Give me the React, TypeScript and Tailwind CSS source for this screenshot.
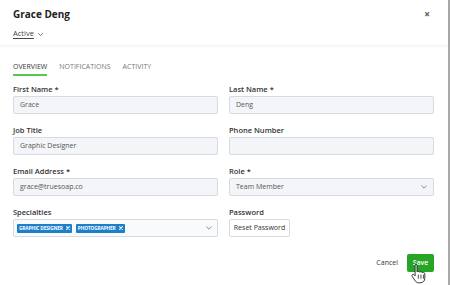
import React from "react";

function Chevron({ className }: { className?: string }) {
  return (
    <svg viewBox="0 0 10 6" className={className} fill="none" stroke="currentColor" strokeWidth="1.4" strokeLinecap="round" strokeLinejoin="round">
      <path d="M1 1l4 4 4-4" />
    </svg>
  );
}

function Field({ label, value, children }: { label: string; value?: string; children?: React.ReactNode }) {
  return (
    <div className="flex flex-col gap-[2px]">
      <div className="h-[10px] leading-[10px] text-[7.5px] font-semibold text-[#333]">{label}</div>
      {children ?? (
        <div className="h-[18px] rounded-[2px] border border-[#d5dbe2] bg-[#f3f5f8] px-[6px] flex items-center text-[7px] text-[#555]">
          {value}
        </div>
      )}
    </div>
  );
}

function Tag({ text }: { text: string }) {
  return (
    <div className="h-[9px] rounded-[1px] bg-[#1b7fca] pl-[2px] pr-[2px] flex items-center gap-[3px] text-white">
      <span className="text-[4.8px] font-bold tracking-[-0.15px] leading-none">{text}</span>
      <svg width="4" height="4" viewBox="0 0 4 4" fill="none" stroke="white" strokeWidth="1.1" strokeLinecap="round">
        <path d="M0.6 0.6l2.8 2.8M3.4 0.6L0.6 3.4" />
      </svg>
    </div>
  );
}

export default function App() {
  return (
    <div className="w-[450px] h-[285px] bg-white relative flex overflow-hidden font-['Open_Sans',sans-serif]">
      <div className="flex-1 flex flex-col">
        <div className="h-[45px] px-[13px] pr-[18px] shadow-[0_1px_3px_rgba(0,0,0,0.07)] relative z-10 flex flex-col">
          <div className="flex items-center justify-between h-[14px] mt-[7px]">
            <div className="text-[10px] font-bold text-[#222] leading-none">Grace Deng</div>
            <div className="text-[10px] font-bold text-[#555] leading-none">×</div>
          </div>
          <div className="flex items-center gap-[4px] mt-[7px] h-[12px]">
            <span className="text-[7.5px] text-[#444] underline underline-offset-[2px] leading-none">Active</span>
            <Chevron className="w-[5px] h-[3px] text-[#444]" />
          </div>
        </div>

        <div className="px-[13px] mt-[18px] flex gap-[12px] text-[7px] leading-none">
          <div className="flex flex-col items-stretch">
            <span className="text-[#333] h-[9px]">OVERVIEW</span>
            <div className="mt-[2px] h-[2px] bg-[#55c949]" />
          </div>
          <span className="text-[#777]">NOTIFICATIONS</span>
          <span className="text-[#777]">ACTIVITY</span>
        </div>

        <div className="pl-[13px] pr-[14px] mt-[8px] grid grid-cols-2 gap-x-[11px] gap-y-[11px]">
          <Field label="First Name *" value="Grace" />
          <Field label="Last Name *" value="Deng" />
          <Field label="Job Title" value="Graphic Designer" />
          <Field label="Phone Number" value="" />
          <Field label="Email Address *" value="grace@truesoap.co" />
          <Field label="Role *">
            <div className="h-[18px] rounded-[2px] border border-[#d5dbe2] bg-[#f3f5f8] px-[6px] flex items-center justify-between text-[7px] text-[#555]">
              <span>Team Member</span>
              <Chevron className="w-[6px] h-[4px] text-[#777]" />
            </div>
          </Field>
          <Field label="Specialties">
            <div className="h-[18px] rounded-[2px] border border-[#d5dbe2] bg-[#f9fafb] pl-[3px] pr-[5px] flex items-center justify-between">
              <div className="flex items-center gap-[4px]">
                <Tag text="GRAPHIC DESIGNER" />
                <Tag text="PHOTOGRAPHER" />
              </div>
              <Chevron className="w-[6px] h-[4px] text-[#777]" />
            </div>
          </Field>
          <Field label="Password">
            <div className="flex">
              <div className="h-[18px] w-[61px] rounded-[2px] border border-[#d5dbe2] bg-white flex items-center justify-center text-[7px] text-[#333]">
                Reset Password
              </div>
            </div>
          </Field>
        </div>

        <div className="pr-[14px] mt-[17px] flex justify-end items-center gap-[9px]">
          <span className="text-[7px] text-[#333]">Cancel</span>
          <div className="h-[18px] w-[27px] rounded-[2px] bg-[#26a526] flex items-center justify-center text-[7px] font-semibold text-white">
            Save
          </div>
        </div>
      </div>
      <div className="w-[2px] bg-[#a9a9a9]" />

      <svg className="absolute left-[411px] top-[263px]" width="16" height="21" viewBox="0 0 16 21">
        <path
          d="M4.5 1.2c.9 0 1.5.6 1.5 1.5v6.2c.3-.4.8-.6 1.3-.6.7 0 1.2.4 1.4.9.3-.3.7-.5 1.2-.5.7 0 1.2.4 1.4 1 .3-.2.6-.3 1-.3.9 0 1.5.7 1.5 1.6v4.2c0 2.6-1.7 4.6-4.3 4.6H7.6c-1.4 0-2.4-.6-3.2-1.7L1.2 13.4c-.4-.6-.3-1.4.3-1.8.6-.4 1.3-.3 1.7.2l.9 1V2.7c0-.9.6-1.5 1.3-1.5z"
          fill="white"
          stroke="#222"
          strokeWidth="0.9"
          strokeLinejoin="round"
        />
        <path d="M7.3 12v3.3M9.9 12v3.3M12.4 12v3.3" stroke="#222" strokeWidth="0.8" strokeLinecap="round" />
      </svg>
    </div>
  );
}
